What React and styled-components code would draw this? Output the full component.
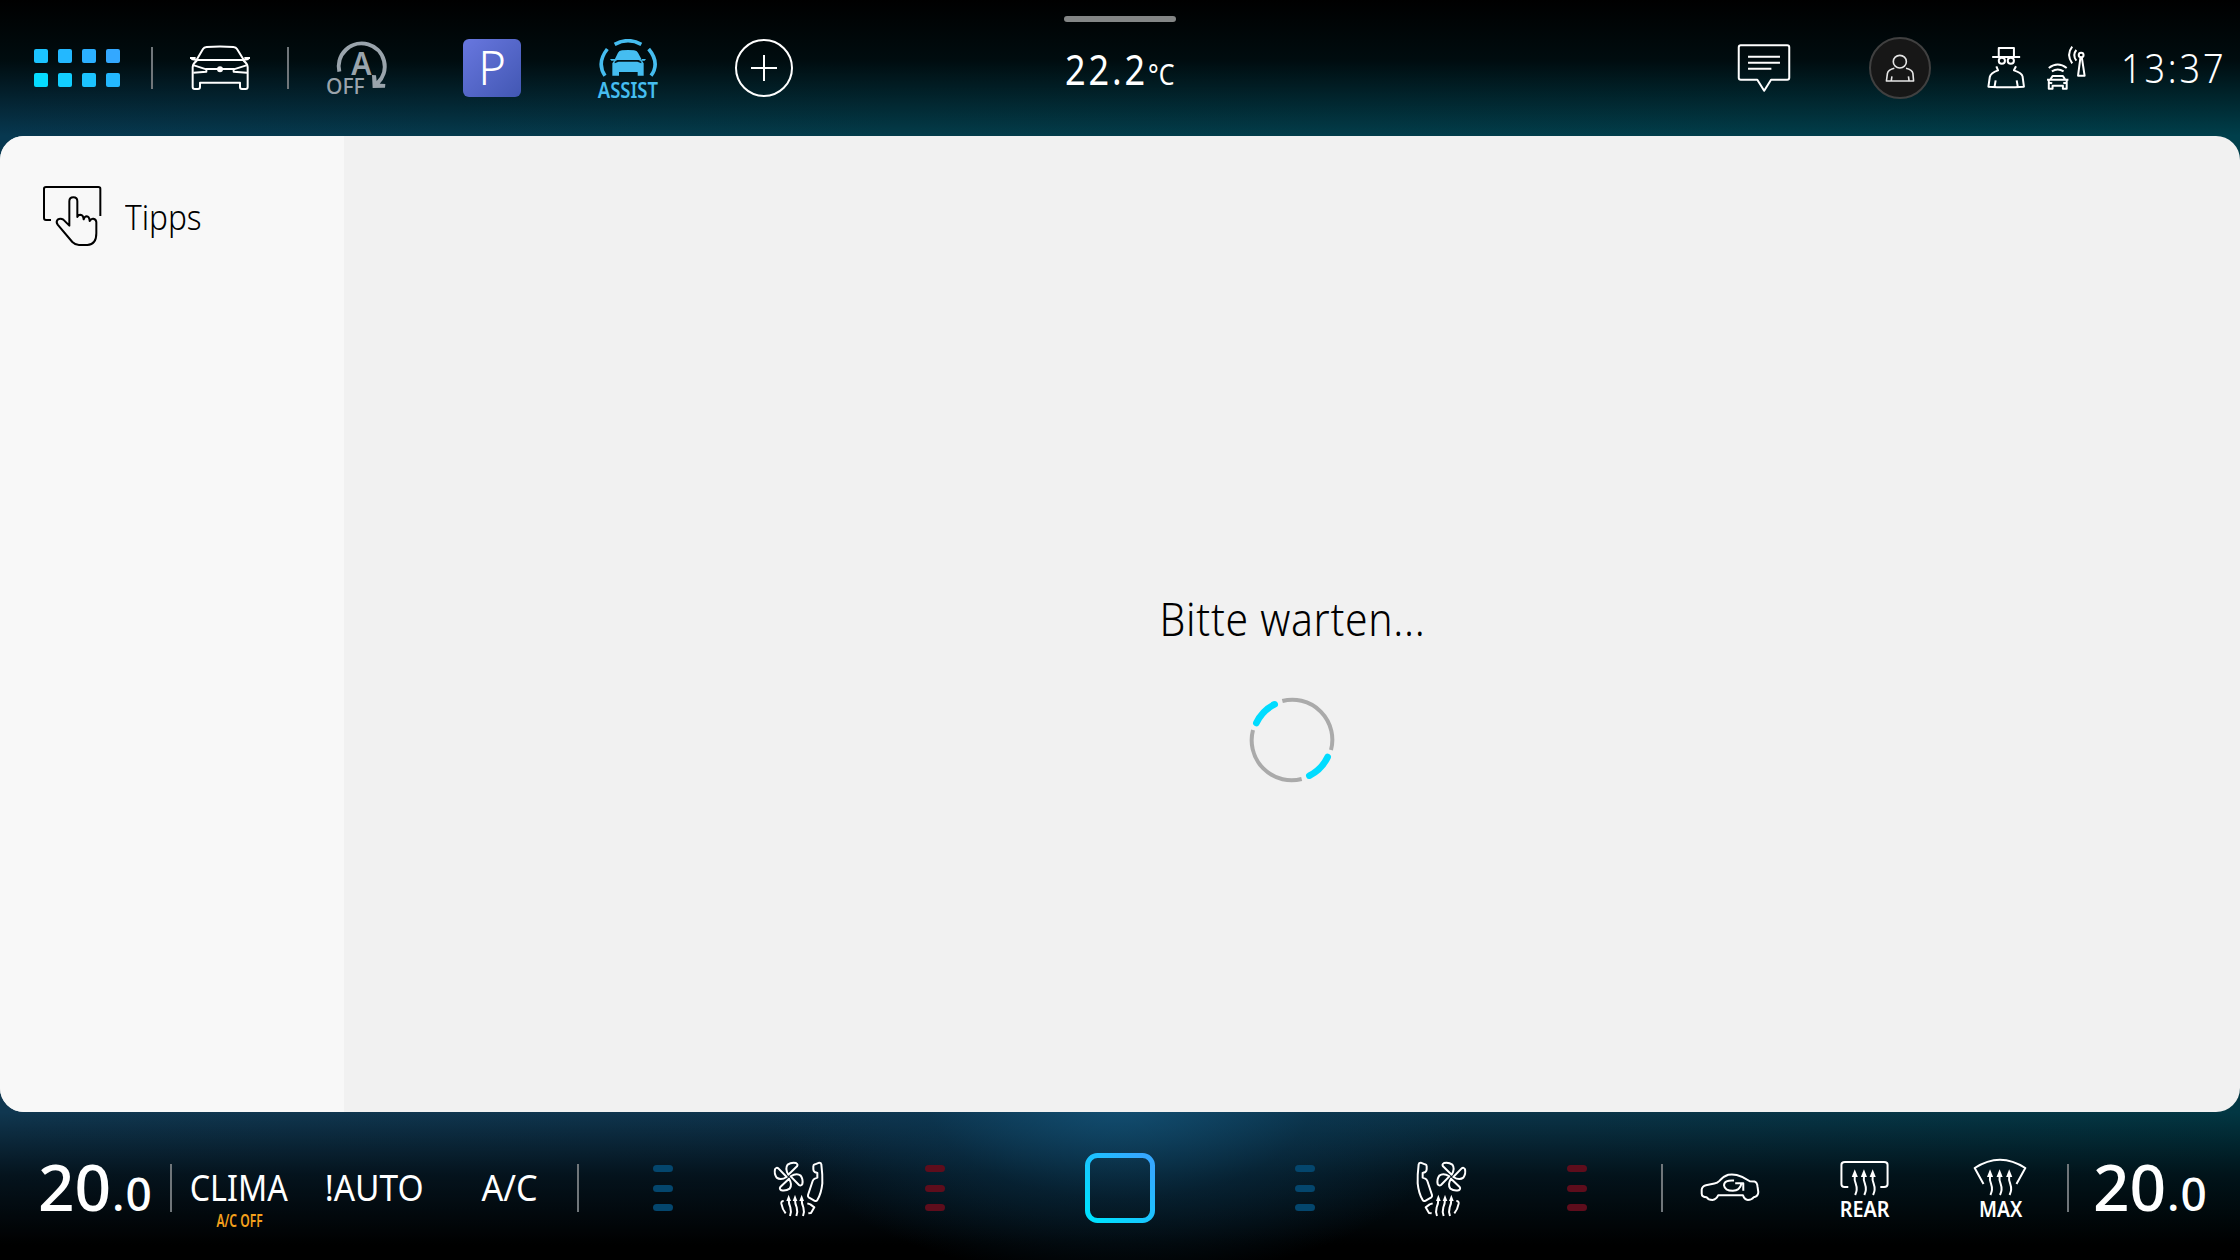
import React from "react";
import styled, { createGlobalStyle, css } from "styled-components";

const GlobalStyle = createGlobalStyle`
  * { box-sizing: border-box; }
  body { margin: 0; background: #000; overflow: hidden; }
`;

const Screen = styled.div`
  display: flex;
  flex-direction: column;
  width: 2240px;
  height: 1260px;
  color: #fff;
  font-family: "Noto Sans", "Open Sans", sans-serif;
  background:
    radial-gradient(ellipse 350px 180px at 1120px 1100px, rgba(20, 88, 128, 0.75), rgba(12, 60, 90, 0.38) 55%, transparent),
    linear-gradient(to bottom, #000 0, #000c0f 60px, rgba(0, 12, 15, 0) 136px, transparent 1112px, rgba(0, 6, 10, 0.72) 1175px, #000 1245px),
    linear-gradient(to right, #073850, #033c4a 40%, #003f4b) 0 0 / 100% 200px no-repeat,
    linear-gradient(to right, #103750, #0e344d 40%, #0a3448 70%, #023743);
`;

const Bar = styled.div`
  display: flex;
  flex: none;
  justify-content: space-between;
  height: ${(p) => p.$height}px;
`;

const Group = styled.div`
  display: flex;
  align-items: stretch;
  ${(p) => p.$width && css`width: ${p.$width}px;`}
`;

const Slot = styled.div`
  display: flex;
  flex-direction: column;
  align-items: center;
  justify-content: center;
  flex: none;
  width: ${(p) => p.$width || 136}px;
  gap: ${(p) => p.$gap || 0}px;
  padding-top: ${(p) => p.$top || 0}px;
`;

const Divider = styled.div`
  align-self: center;
  flex: none;
  width: 2px;
  height: ${(p) => p.$height}px;
  margin: ${(p) => p.$top || 0}px -1px 0;
  background: #70767a;
`;

const Text = styled.span`
  display: block;
  flex: none;
  ${(p) => p.$width && css`width: ${p.$width}px;`}
  white-space: pre;
  font-size: ${(p) => p.$size}px;
  font-weight: ${(p) => p.$weight || 400};
  line-height: ${(p) => p.$line || p.$size}px;
  letter-spacing: ${(p) => p.$spacing || 0}px;
  color: ${(p) => p.$color || "inherit"};
  transform: scaleX(${(p) => p.$stretch || 1});
  transform-origin: ${(p) => p.$origin || "center"};
`;

const Svg = styled.svg`
  display: block;
  flex: none;
  fill: none;
  stroke: currentColor;
  stroke-linejoin: round;
  transform: ${(p) => (p.$mirror ? "scaleX(-1)" : "none")};
  path, circle, ellipse { vector-effect: non-scaling-stroke; }
  .solid { fill: currentColor; stroke: none; }
  text { fill: currentColor; stroke: none; }
`;

const Icon = ({ w, h, box, line = 2, color = "#fff", mirror, children }) => (
  <Svg width={w} height={h} viewBox={box} preserveAspectRatio="none" strokeWidth={line} color={color} $mirror={mirror}>
    {children}
  </Svg>
);

const AppGrid = styled.div`
  display: grid;
  grid-template-columns: repeat(4, 14px);
  grid-auto-rows: 14px;
  gap: 10px;
  margin-left: 2px;
`;

const AppDot = styled.i`
  border-radius: 2px;
  background: ${(p) => p.$color};
`;

const ParkTile = styled.div`
  display: flex;
  align-items: center;
  justify-content: center;
  width: 58px;
  height: 58px;
  padding-bottom: 3px;
  border-radius: 6px;
  background: linear-gradient(135deg, #6877df, #4257b3);
`;

const AddButton = styled.div`
  display: flex;
  align-items: center;
  justify-content: center;
  width: 58px;
  height: 58px;
  border: 2px solid #fff;
  border-radius: 50%;
`;

const Avatar = styled.div`
  display: flex;
  align-items: center;
  justify-content: center;
  width: 62px;
  height: 62px;
  border: 2px solid #404040;
  border-radius: 50%;
  background: #171717;
`;

const Outside = styled.div`
  display: flex;
  flex-direction: column;
  align-items: center;
  width: 160px;
  padding-top: 16px;
`;

const Handle = styled.div`
  width: 112px;
  height: 6px;
  border-radius: 3px;
  background: #838686;
`;

const OutsideTemp = styled.div`
  display: flex;
  align-items: baseline;
  width: 110px;
  margin-top: 23px;
`;

const Status = styled.div`
  display: flex;
  align-items: center;
  width: 272px;
  padding-left: 18px;
`;

const StatusIcons = styled.div`
  display: flex;
  gap: 19px;
  width: 135px;
`;

const Panel = styled.main`
  display: flex;
  flex: none;
  height: 976px;
  border-radius: 24px;
  overflow: hidden;
  color: #000;
  background: #f1f1f1;
`;

const Sidebar = styled.nav`
  width: 344px;
  padding: 48px 0 0 41px;
  background: #f8f8f8;
`;

const NavItem = styled.div`
  display: flex;
  align-items: center;
  gap: 22px;
  height: 64px;
`;

const Content = styled.section`
  display: flex;
  flex: 1;
  flex-direction: column;
  align-items: center;
  padding-top: 451px;
  gap: 45px;
`;

const CabinTemp = styled.div`
  display: flex;
  align-items: baseline;
  align-self: center;
  flex: none;
  width: ${(p) => p.$width}px;
  padding-left: ${(p) => p.$left}px;
  padding-top: 2px;
`;

const Levels = styled.div`
  display: flex;
  flex-direction: column;
  gap: 12.5px;
`;

const Level = styled.i`
  width: 20px;
  height: 7px;
  border-radius: 3.5px;
  background: ${(p) => (p.$hot ? "#5e0d1c" : "#04466d")};
`;

const dotColors = ["#1bc3ff", "#23b8ff", "#2bafff", "#33a8ff", "#05dbff", "#12ceff", "#1bc3ff", "#23b8ff"];

const CarIcon = () => (
  <Icon w={64} h={48} box="564 132 192 144">
    <path d="M590 179 L609 147 Q612 142 620 141 Q660 138 700 141 Q708 142 711 147 L731 179" />
    <path d="M586 180 H734 M570 174 H587 M574 177 L591 180 M750 174 H733 M746 177 L729 180" />
    <path d="M591 181 Q579 190 578 201 V261 Q578 267 584 267 H594 Q600 267 600 261 V248 H720 V261 Q720 267 726 267 H737 Q743 267 743 261 V201 Q742 190 730 181" />
    <path d="M582 196 L619 208 V215 L580 218 M739 196 L701 208 V215 L741 218 M617 207 H703" />
    <circle className="solid" cx="660" cy="208" r="9" />
  </Icon>
);

const StartStopIcon = () => (
  <Icon w={74} h={56} box="957 117 222 168" color="#9aa4ac" line={4}>
    <path d="M1018 212 A69 69 0 1 1 1133 246" />
    <path className="solid" d="M1116 222 L1128 223 L1130 240 L1141 248 L1156 249 L1155 260 L1118 261 Z" />
    <text x="1054" y="221" fontSize="99" fontWeight="600" textLength="61" lengthAdjust="spacingAndGlyphs">A</text>
    <text x="978" y="278" fontSize="65" fontWeight="500" textLength="116" lengthAdjust="spacingAndGlyphs">OFF</text>
  </Icon>
);

const AssistIcon = () => (
  <Icon w={60} h={38} box="534 114 180 114" color="#45bdf0" line={3.6}>
    <path d="M584 130 Q624 108 664 130 M562 144 Q529 186 555 224 M686 144 Q721 186 693 224" />
    <path className="solid" d="M583 178 L594 155 Q597 149 606 148 Q624 146 642 148 Q651 149 654 155 L666 178 Z M570 174 H584 L588 179 H574 Z M678 174 H664 L660 179 H674 Z" />
    <path className="solid" d="M577 187 L583 178 H665 L671 187 V224 H653 V213 H597 V224 H577 Z" />
    <path d="M584 187 V182 L592 177 H656 L664 182 V187 L652 182 H596 Z" fill="#02131a" stroke="none" />
  </Icon>
);

const MessageIcon = () => (
  <Icon w={56} h={50} box="104 130 163 150">
    <path d="M166 240 H118 Q112 240 112 234 V143 Q112 137 118 137 H253 Q259 137 259 143 V234 Q259 240 253 240 H206 L186 273 Z M139 171 H232 M139 189 H232 M139 207 H207" />
  </Icon>
);

const PersonIcon = () => (
  <Icon w={32} h={30} box="534 160 93 90" line={1.6} color="#e6e6e6">
    <ellipse cx="580" cy="186" rx="19" ry="19" />
    <path d="M564 206 Q546 211 544 221 L541 244 H620 L618 221 Q616 211 598 206 M557 230 L555 244 M605 230 L607 244" />
  </Icon>
);

const IncognitoIcon = () => (
  <Icon w={40} h={45} box="830 138 116 135" line={2}>
    <path d="M867 173 V147 H911 V173 M848 174 H929" />
    <ellipse cx="876" cy="185" rx="9" ry="9" />
    <ellipse cx="902" cy="185" rx="9" ry="9" />
    <path d="M860 202 L865 214 Q843 222 841 234 L837 263 Q888 267 940 263 L936 232 Q934 222 911 214 L917 202 M858 244 L855 262 M919 244 L922 262" />
  </Icon>
);

const SignalIcon = () => (
  <Icon w={42} h={47} box="1001 134 122 141" line={2}>
    <path d="M1012 203 Q1038 182 1064 203 M1021 213 Q1038 202 1055 213" />
    <path d="M1017 237 L1023 227 H1053 L1059 237 M1007 238 H1069 M1012 239 V265 H1023 V256 H1053 V265 H1064 V239 M1013 247 L1022 249 M1063 247 L1054 249" />
    <ellipse cx="1106" cy="164" rx="7" ry="7" />
    <path d="M1104 171 L1097 226 H1116 L1108 171 M1080 139 Q1062 163 1080 189 M1092 149 Q1080 164 1092 181" />
  </Icon>
);

const TouchIcon = () => (
  <Icon w={62} h={64} box="123 102 186 192" color="#000">
    <path d="M153 210 H138 Q132 210 132 204 V116 Q132 111 138 111 H295 Q301 111 301 116 V198" />
    <path d="M208 227 V154 Q208 142 220 142 Q232 142 232 154 V201 Q234 194 241 194 Q250 195 251 208 Q254 199 260 199 Q268 200 269 213 Q273 205 280 206 Q289 208 289 217 V250 Q289 284 262 285 H237 Q226 285 217 276 L173 224 Q167 216 173 209 Q181 203 190 209 Z" />
  </Icon>
);

const Spinner = () => (
  <Icon w={88} h={88} box="324 348 264 264" color="#aaa" line={4}>
    <path d="M427 363 A120 120 0 0 1 573 510 M485 597 A120 120 0 0 1 339 450" />
    <path d="M404 373 A119 119 0 0 0 349 429 M563 531 A119 119 0 0 1 508 587" stroke="#00dcff" strokeWidth="6.6" strokeLinecap="round" />
  </Icon>
);

const blade = "M-1 -6 Q-12 -24 -3 -36 Q8 -44 22 -41 Q29 -37 25 -31 Z";

const SeatIcon = ({ mirror }) => (
  <Icon w={56} h={58} box="453 120 168 174" mirror={mirror}>
    {[0, 90, 180, 270].map((angle) => (
      <path key={angle} d={blade} transform={`translate(506 170) rotate(${angle})`} />
    ))}
    <path d="M580 139 Q580 134 585 133 L598 128 Q603 128 604 133 Q608 165 607 190 Q604 220 592 240 Q589 245 583 242 L566 232 Q563 229 564 225 L578 183 Q580 177 586 175 L592 173 V159 L584 156 Q580 153 580 148 Z" />
    <path d="M491 243 Q483 243 484 251 Q487 268 497 280 M562 250 L571 253 L583 262 L573 279 L565 280" />
    {[506, 525, 545].map((x) => (
      <React.Fragment key={x}>
        <path d={`M${x} 238 Q${x} 252 ${x + 5} 262 Q${x + 9} 275 ${x + 4} 288`} />
        <path className="solid" d={`M${x} 224 L${x - 7} 243 H${x + 7} Z`} />
      </React.Fragment>
    ))}
  </Icon>
);

const HomeIcon = () => (
  <Icon w={70} h={70} box="0 0 70 70" line={5}>
    <defs>
      <linearGradient id="home" x1="0" y1="1" x2="1" y2="0">
        <stop offset="0.1" stopColor="#00dfff" />
        <stop offset="0.9" stopColor="#35a8ff" />
      </linearGradient>
    </defs>
    <rect x="2.5" y="2.5" width="65" height="65" rx="10" stroke="url(#home)" />
  </Icon>
);

const RecirculationIcon = () => (
  <Icon w={62} h={30} box="152 157 161 88">
    <path d="M172 231 Q159 231 159 220 V209 Q160 199 170 196 L192 191 Q200 189 205 183 Q216 169 228 165 Q240 163 250 166 Q268 171 284 184 L296 185 Q303 187 304 200 L306 216 Q306 229 294 231 Q289 239 279 239 Q270 238 266 225 H202 Q197 238 187 239 Q176 239 172 231 Z" />
    <path d="M243 182 Q217 180 217 196 Q219 212 240 212 Q258 211 262 192 M246 190 H267 V212" />
  </Icon>
);

const HeatArrows = ({ xs }) => xs.map((x) => (
  <React.Fragment key={x}>
    <path d={`M${x} 168 Q${x - 2} 182 ${x + 3} 193 Q${x + 8} 208 ${x + 1} 225`} />
    <path className="solid" d={`M${x} 148 L${x - 8} 171 H${x + 8} Z`} />
  </React.Fragment>
));

const RearIcon = () => (
  <Icon w={53} h={40} box="519 111 139 120">
    <path d="M546 201 H536 Q528 201 528 193 V134 Q528 126 537 126 H640 Q649 126 649 134 V193 Q649 201 640 201 H630" />
    <HeatArrows xs={[563, 587, 610]} />
  </Icon>
);

const WindscreenIcon = () => (
  <Icon w={56} h={40} box="870 111 146 120">
    <path d="M900 192 L877 144 Q943 94 1009 144 L986 192" />
    <HeatArrows xs={[917, 942, 967]} />
  </Icon>
);

const LevelStack = ({ hot }) => (
  <Slot $top={4}>
    <Levels>{[0, 1, 2].map((n) => <Level key={n} $hot={hot} />)}</Levels>
  </Slot>
);

const Temperature = ({ width, left }) => (
  <CabinTemp $width={width} $left={left}>
    <Text $size={64} $weight={500} $width={74}>20</Text>
    <Text $size={46} $weight={500} $spacing={1}>.0</Text>
  </CabinTemp>
);

const SeatGroup = ({ mirror }) => (
  <Group>
    <LevelStack />
    <Slot $top={6}><SeatIcon mirror={mirror} /></Slot>
    <LevelStack hot />
  </Group>
);

export default function App() {
  return (
    <Screen>
      <GlobalStyle />
      <Bar $height={136}>
        <Group $width={1040}>
          <Slot $width={152}>
            <AppGrid>{dotColors.map((c, i) => <AppDot key={i} $color={c} />)}</AppGrid>
          </Slot>
          <Divider $height={42} />
          <Slot><CarIcon /></Slot>
          <Divider $height={42} />
          <Slot><StartStopIcon /></Slot>
          <Slot><ParkTile><Text $size={48} $weight={300} $stretch={0.98}>P</Text></ParkTile></Slot>
          <Slot $gap={4}>
            <AssistIcon />
            <Text $size={22} $line={16} $weight={600} $color="#45bdf0" $stretch={0.84}>ASSIST</Text>
          </Slot>
          <Slot>
            <AddButton><Icon w={26} h={26} box="0 0 26 26"><path d="M13 0 V26 M0 13 H26" /></Icon></AddButton>
          </Slot>
        </Group>
        <Outside>
          <Handle />
          <OutsideTemp>
            <Text $size={41} $line={48} $weight={400} $width={83} $spacing={3.2} $stretch={0.88} $origin="left">22.2</Text>
            <Text $size={29} $line={48} $stretch={0.86} $origin="left">°C</Text>
          </OutsideTemp>
        </Outside>
        <Group $width={1040}>
          <Slot $width={496} />
          <Slot><MessageIcon /></Slot>
          <Slot><Avatar><PersonIcon /></Avatar></Slot>
          <Status>
            <StatusIcons><IncognitoIcon /><SignalIcon /></StatusIcons>
            <Text $size={40} $line={42} $weight={300} $spacing={3.2} $stretch={0.9} $origin="left">13:37</Text>
          </Status>
        </Group>
      </Bar>
      <Panel>
        <Sidebar>
          <NavItem>
            <TouchIcon />
            <Text $size={35} $weight={300} $stretch={0.9} $origin="left">Tipps</Text>
          </NavItem>
        </Sidebar>
        <Content>
          <Text $size={45} $line={64} $weight={300} $spacing={0.8} $stretch={0.908}>Bitte warten...</Text>
          <Spinner />
        </Content>
      </Panel>
      <Bar $height={148}>
        <Group $width={1016}>
          <Temperature width={171.4} left={38} />
          <Divider $height={48} $top={4} />
          <Slot $width={135.4} $top={22}>
            <Text $size={36} $line={48} $stretch={0.895}>CLIMA</Text>
            <Text $size={17} $line={18} $weight={600} $color="#f5a11c" $stretch={0.71}>A/C OFF</Text>
          </Slot>
          <Slot $width={135.4} $top={4}><Text $size={36} $stretch={0.93}>!AUTO</Text></Slot>
          <Slot $width={135.4} $top={4}><Text $size={36} $stretch={0.95}>A/C</Text></Slot>
          <Divider $height={48} $top={4} />
          <Slot $width={17.4} />
          <SeatGroup />
        </Group>
        <Slot $top={4}><HomeIcon /></Slot>
        <Group $width={1016}>
          <Slot $width={13} />
          <SeatGroup mirror />
          <Slot $width={17} />
          <Divider $height={48} $top={4} />
          <Slot $width={135.3} $top={2}><RecirculationIcon /></Slot>
          <Slot $width={135.3} $gap={3} $top={1}>
            <RearIcon />
            <Text $size={22} $line={16} $weight={600} $stretch={0.9}>REAR</Text>
          </Slot>
          <Slot $width={135.3} $gap={3} $top={1}>
            <WindscreenIcon />
            <Text $size={22} $line={16} $weight={600} $stretch={0.88}>MAX</Text>
          </Slot>
          <Divider $height={48} $top={4} />
          <Temperature width={174} left={25} />
        </Group>
      </Bar>
    </Screen>
  );
}
